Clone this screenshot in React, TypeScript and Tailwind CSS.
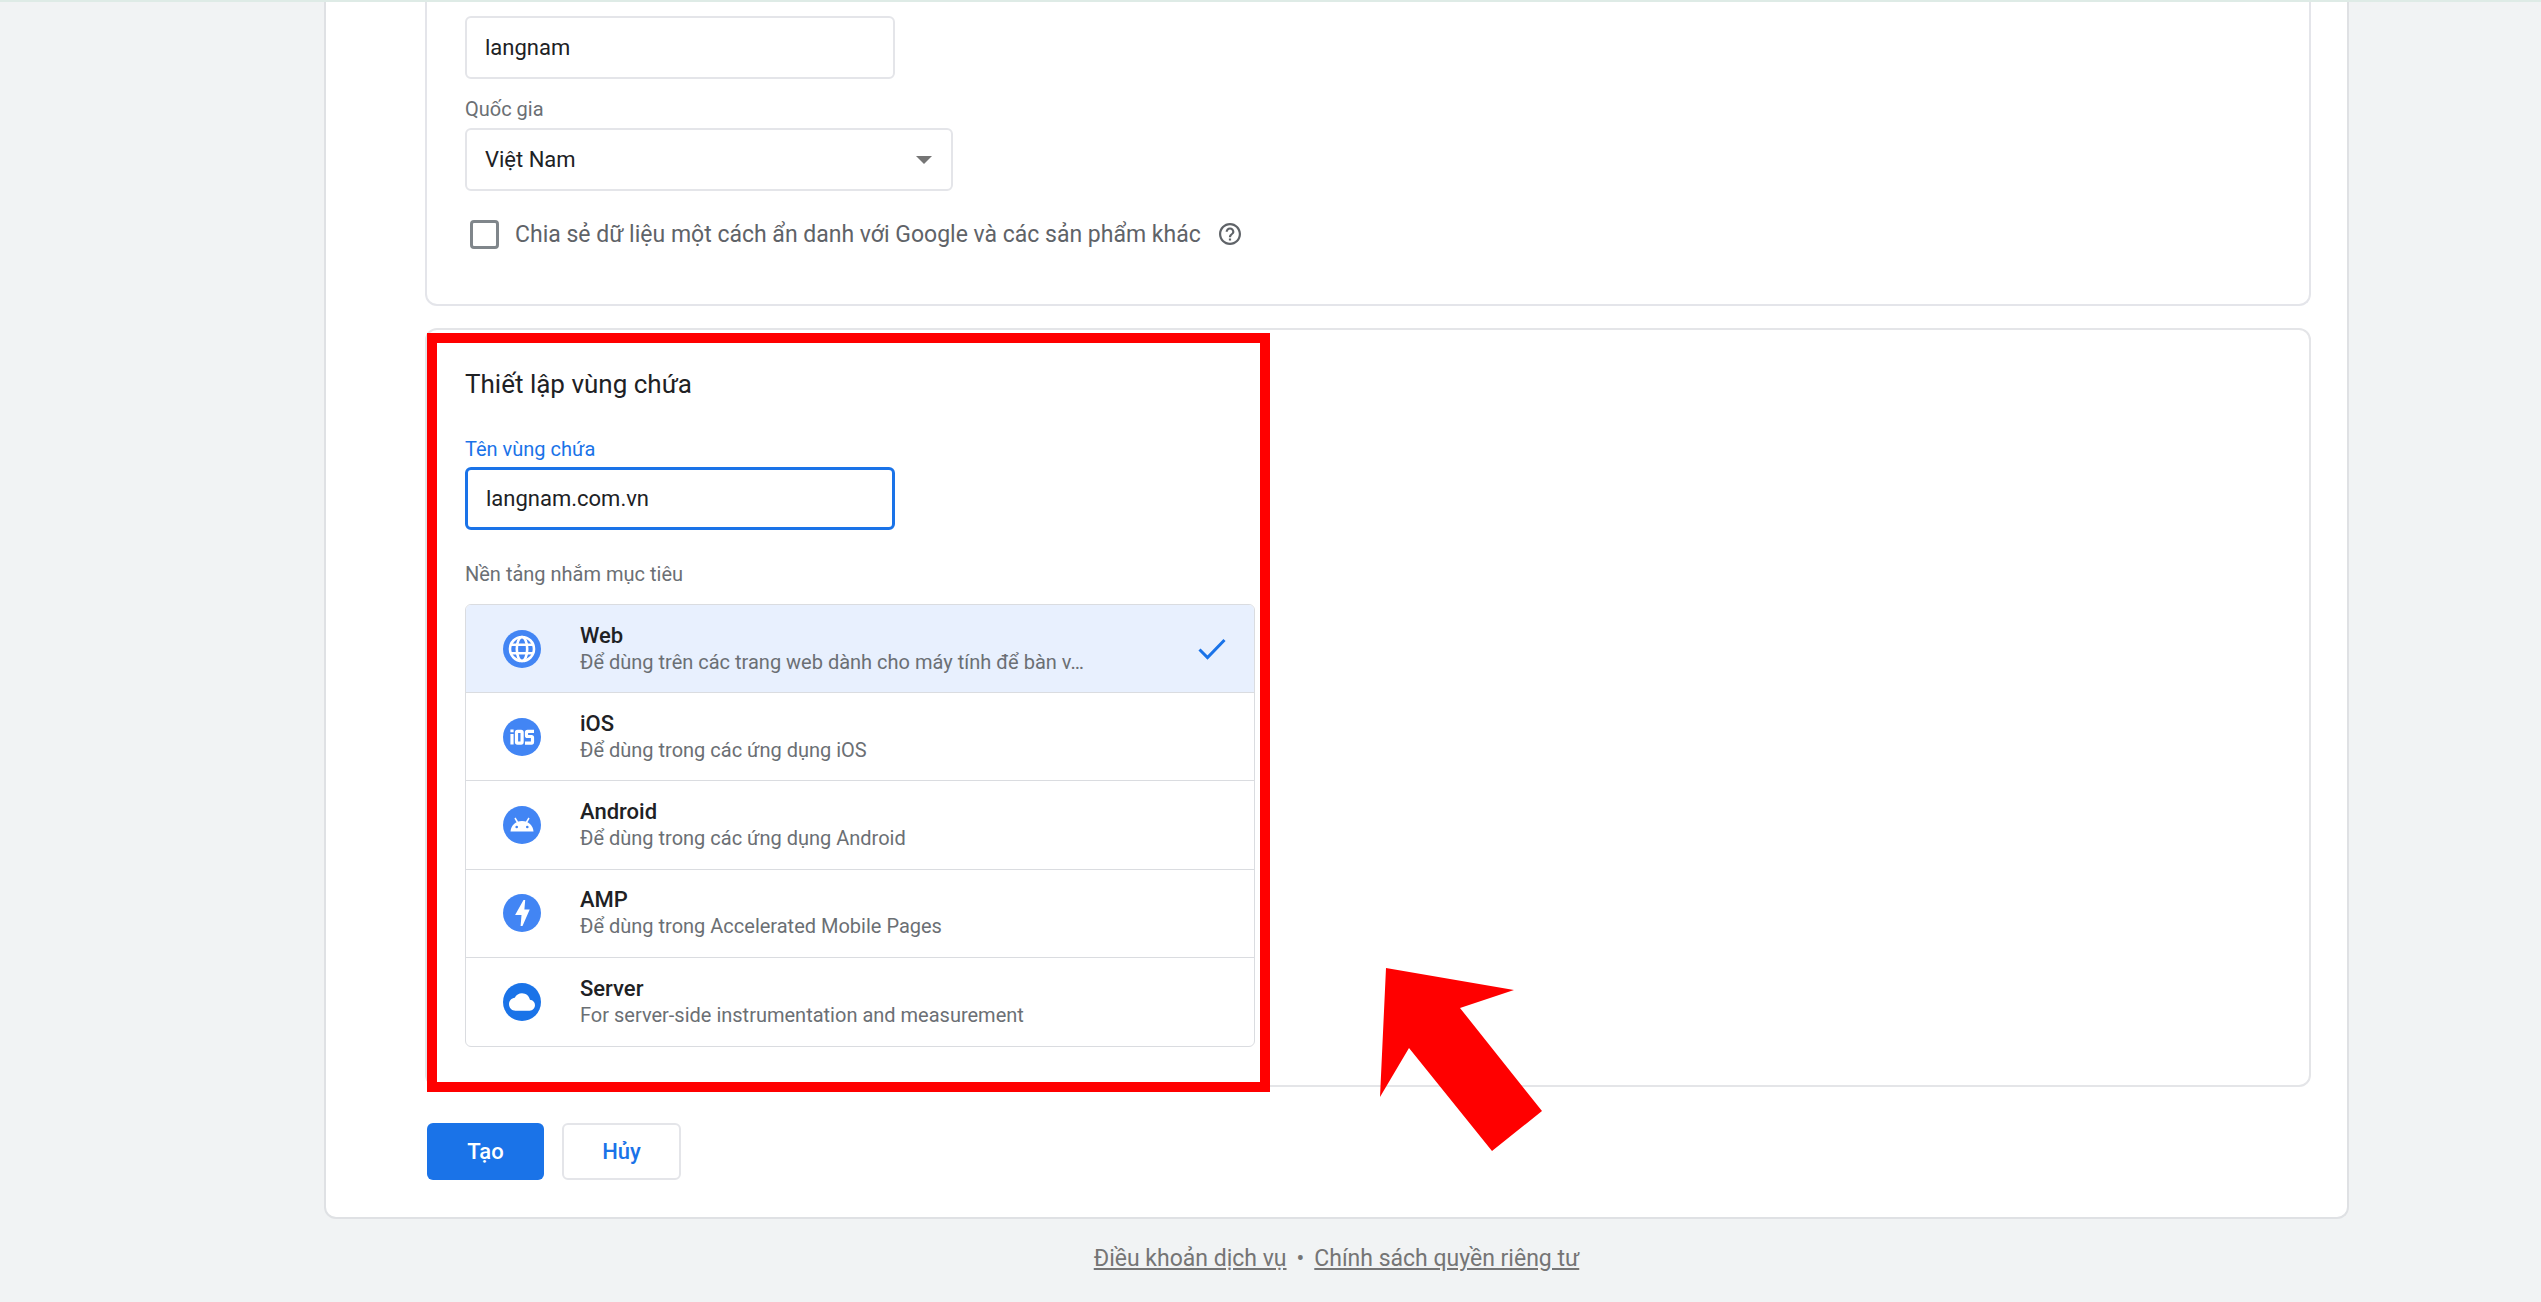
import React from "react";

function Badge({ color, children }: { color: string; children: React.ReactNode }) {
  return (
    <svg viewBox="0 0 38 38" className="size-[38px] shrink-0" aria-hidden="true">
      <circle cx="19" cy="19" r="19" fill={color} />
      {children}
    </svg>
  );
}

const platforms = [
  {
    id: "web",
    name: "Web",
    text: "Để dùng trên các trang web dành cho máy tính để bàn v…",
    icon: (
      <Badge color="#4285f4">
        <g fill="none" stroke="#fff" strokeWidth="2.6">
          <circle cx="19" cy="19" r="12" />
          <ellipse cx="19" cy="19" rx="5.2" ry="12" />
          <path d="M8 14.8h22M8 23.2h22" />
        </g>
      </Badge>
    ),
  },
  {
    id: "ios",
    name: "iOS",
    text: "Để dùng trong các ứng dụng iOS",
    icon: (
      <Badge color="#4285f4">
        <g fill="none" stroke="#fff" strokeWidth="3.2">
          <path d="M9 11.500v2.700M9 16v10.500" />
          <rect x="13.500" y="13.300" width="5.600" height="11.800" rx="1" />
          <path d="M31 13.300h-6.500q-1 0-1 1v3.200q0 1 1 1h4q1 0 1 1v4.600q0 1-1 1h-6.500" />
        </g>
      </Badge>
    ),
  },
  {
    id: "android",
    name: "Android",
    text: "Để dùng trong các ứng dụng Android",
    icon: (
      <Badge color="#4285f4">
        <path d="M12 12l3 5M26 12l-3 5" stroke="#fff" strokeWidth="1.500" />
        <path d="M7.500 25.500c.5-6 5-10.500 11.500-10.500s11 4.500 11.500 10.500z" fill="#fff" />
        <circle cx="13.700" cy="21" r="1.300" fill="#4285f4" />
        <circle cx="24.300" cy="21" r="1.300" fill="#4285f4" />
      </Badge>
    ),
  },
  {
    id: "amp",
    name: "AMP",
    text: "Để dùng trong Accelerated Mobile Pages",
    icon: (
      <Badge color="#4285f4">
        <path d="M20.500 6h1.700l-.8 9.500h5.300l-7.200 16.500h-1.900l.9-11h-6.400z" fill="#fff" />
      </Badge>
    ),
  },
  {
    id: "server",
    name: "Server",
    text: "For server-side instrumentation and measurement",
    icon: (
      <Badge color="#1a73e8">
        <path transform="translate(6 6) scale(1.083)" d="M19.350 10.040C18.670 6.590 15.640 4 12 4 9.110 4 6.600 5.640 5.350 8.040 2.340 8.360 0 10.910 0 14c0 3.310 2.690 6 6 6h13c2.760 0 5-2.240 5-5 0-2.640-2.050-4.780-4.650-4.960z" fill="#fff" />
      </Badge>
    ),
  },
];

export default function App() {
  const [selected, setSelected] = React.useState("web");
  return (
    <div className="min-h-screen overflow-hidden border-t-2 border-[#deebe6] bg-[#f1f3f4] font-[Roboto,sans-serif] text-[#202124]">
      <main className="mr-[192px] ml-[324px] rounded-b-xl border-2 border-t-0 border-[#dfe1e4] bg-white pr-9 pb-[37px] pl-[99px]">
        <section className="rounded-b-xl border-2 border-t-0 border-[#e4e5ea] px-[38px] pt-[14px] pb-[54px]">
          <input
            aria-label="Tên tài khoản"
            defaultValue="langnam"
            className="block h-[63px] w-[430px] rounded-md border-2 border-[#e4e5e9] px-[18px] text-[22px] outline-none"
          />
          <label htmlFor="country" className="mt-4 block text-[20px] leading-7 text-[#6b6f74]">
            Quốc gia
          </label>
          <div className="relative mt-[5px] w-[488px]">
            <select
              id="country"
              className="block h-[63px] w-full appearance-none rounded-md border-2 border-[#e4e5e9] bg-white px-[18px] text-[22px] outline-none"
            >
              <option>Việt Nam</option>
            </select>
            <svg viewBox="0 0 16 8" className="pointer-events-none absolute top-7 right-[21px] h-2 w-4" aria-hidden="true">
              <path d="M0 0h16l-8 8z" fill="#757575" />
            </svg>
          </div>
          <div className="mt-[27px] flex items-center pl-[5px]">
            <input
              id="share"
              type="checkbox"
              className="size-[29px] appearance-none rounded-[4px] border-3 border-[#80868b] checked:bg-[#1a73e8]"
            />
            <label htmlFor="share" className="ml-4 pt-0.5 text-[23px] leading-[30px] text-[#5f6368]">
              Chia sẻ dữ liệu một cách ẩn danh với Google và các sản phẩm khác
            </label>
            <button type="button" aria-label="Trợ giúp" className="ml-[18px]">
              <svg viewBox="2 2 20 20" className="size-[22px]" aria-hidden="true">
                <path fill="#5f6368" d="M11 18h2v-2h-2v2zm1-16C6.480 2 2 6.480 2 12s4.480 10 10 10 10-4.480 10-10S17.520 2 12 2zm0 18c-4.410 0-8-3.590-8-8s3.590-8 8-8 8 3.590 8 8-3.590 8-8 8zm0-14c-2.210 0-4 1.790-4 4h2c0-1.100.9-2 2-2s2 .9 2 2c0 2-3 1.750-3 5h2c0-2.250 3-2.500 3-5 0-2.210-1.790-4-4-4z" />
              </svg>
            </button>
          </div>
        </section>

        <section className="relative mt-[22px] rounded-xl border-2 border-[#e4e5e8] px-[38px] pt-9 pb-[38px]">
          <h2 className="text-[26px] leading-9">Thiết lập vùng chứa</h2>
          <label htmlFor="container" className="mt-[33px] block text-[20px] leading-7 text-[#1a73e8]">
            Tên vùng chứa
          </label>
          <input
            id="container"
            defaultValue="langnam.com.vn"
            className="mt-1 block h-[63px] w-[430px] rounded-md border-3 border-[#1a73e8] px-[18px] text-[22px] outline-none"
          />
          <p id="platforms" className="mt-[30px] text-[20px] leading-7 text-[#6b6f74]">
            Nền tảng nhắm mục tiêu
          </p>
          <div
            role="group"
            aria-labelledby="platforms"
            className="mt-4 grid h-[443px] w-[790px] auto-rows-fr divide-y divide-[#dadce0] overflow-hidden rounded-md border border-[#dadce0]"
          >
            {platforms.map((p) => (
              <button
                key={p.id}
                type="button"
                aria-pressed={selected === p.id}
                onClick={() => setSelected(p.id)}
                className="flex items-center pr-7 pl-[37px] text-left aria-pressed:bg-[#e8f0fe]"
              >
                {p.icon}
                <span className="ml-[39px] flex flex-col">
                  <span className="text-[22px] leading-[26px] font-medium">{p.name}</span>
                  <span className="text-[20px] leading-[26px] text-[#6b6f74]">{p.text}</span>
                </span>
                {selected === p.id && (
                  <svg viewBox="0 0 28 22" className="ml-auto h-[22px] w-7" aria-hidden="true">
                    <path d="M1.500 11.500l8 8L26.500 2" fill="none" stroke="#1a73e8" strokeWidth="3" />
                  </svg>
                )}
              </button>
            ))}
          </div>
          <div className="pointer-events-none absolute top-[3px] -bottom-[7px] left-0 w-[843px] border-10 border-[#ff0000]" />
          <svg viewBox="0 0 162 183" className="pointer-events-none absolute -bottom-[66px] left-[953px] h-[183px] w-[162px]" aria-hidden="true">
            <path d="M6 0l128 22-54 18 82 103-50 40-83-103-29 49z" fill="#f00" />
          </svg>
        </section>

        <div className="mt-9 flex gap-[18px] pl-0.5">
          <button type="button" className="h-[57px] w-[117px] rounded-md bg-[#1a73e8] text-[22px] font-medium text-white">
            Tạo
          </button>
          <button type="button" className="h-[57px] w-[119px] rounded-md border-2 border-[#e4e5e9] text-[22px] font-medium text-[#1a73e8]">
            Hủy
          </button>
        </div>
      </main>
      <footer className="mr-[192px] ml-[324px] flex justify-center gap-[10px] pt-6 text-[23px] leading-8 text-[#757575]">
        <a href="#terms" className="underline">Điều khoản dịch vụ</a>
        <span>•</span>
        <a href="#privacy" className="underline">Chính sách quyền riêng tư</a>
      </footer>
    </div>
  );
}
